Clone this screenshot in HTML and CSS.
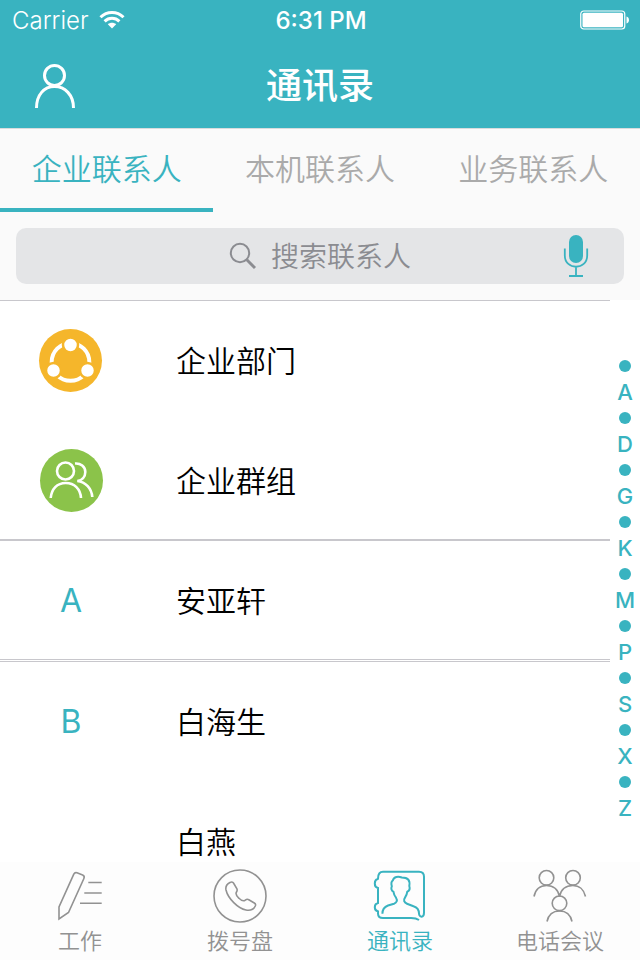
FILE: index.html
```html
<!DOCTYPE html>
<html lang="zh-CN">
<head>
    <meta charset="UTF-8">
    <meta name="viewport" content="width=device-width, initial-scale=1.0">
    <title>通讯录</title>
    <link rel="stylesheet" href="styles.css">
</head>
<body>
    <header class="header">
        <!-- 状态栏 -->
        <div class="status-bar">
            <div class="carrier">
                <span>Carrier</span>
                <svg width="26" height="20" viewBox="0 0 26 20" fill="none" stroke="#fff" stroke-width="3">
                    <path d="M1.5 7.2C8 .8 18 .8 24.500 7.200"/>
                    <path d="M5.600 11.300C9.800 7.300 16.200 7.300 20.400 11.300"/>
                    <path d="M13 18.500l-4.200-4.200c2.400-2 6-2 8.400 0z" fill="#fff" stroke="none"/>
                </svg>
            </div>
            <time class="clock">6:31 PM</time>
            <svg class="battery" width="50" height="20" viewBox="0 0 50 20">
                <rect x=".75" y="1" width="44" height="18" rx="3" fill="none" stroke="#fff" stroke-width="1.200"/>
                <rect x="2.500" y="2.700" width="40.500" height="14.600" rx="1.500" fill="#fff"/>
                <path d="M46.500 6.500c3.300.5 3.300 6.500 0 7z" fill="#fff"/>
            </svg>
        </div>
        <div class="nav">
            <button class="nav-user" aria-label="个人">
                <svg width="44" height="46" viewBox="0 0 44 46" fill="none" stroke="#fff" stroke-width="3">
                    <circle cx="21.500" cy="12.500" r="10"/>
                    <path d="M3.500 45C3.500 32 11 23.500 21.500 23.500S40.500 32 40.500 45"/>
                </svg>
            </button>
            <h1>通讯录</h1>
        </div>
    </header>

    <nav class="tabs">
        <a href="#" class="active">企业联系人</a>
        <a href="#">本机联系人</a>
        <a href="#">业务联系人</a>
    </nav>

    <!-- 搜索框 -->
    <div class="search-area">
        <div class="search">
            <label class="search-field">
                <svg width="28" height="28" viewBox="0 0 28 28" fill="none" stroke="#8b8c91">
                    <circle cx="11" cy="11" r="9.200" stroke-width="2"/>
                    <path d="M17.800 17.800L26 26" stroke-width="3"/>
                </svg>
                <input type="text" placeholder="搜索联系人" aria-label="搜索联系人">
            </label>
            <button class="mic" aria-label="语音搜索">
                <svg width="26" height="44" viewBox="0 0 26 44">
                    <rect x="6" y="1" width="14" height="28" rx="7" fill="#39b3c0"/>
                    <path d="M1.800 14.500v7c0 15 22.400 15 22.400 0v-7M13 33v9M6 42h14" fill="none" stroke="#39b3c0" stroke-width="1.800"/>
                </svg>
            </button>
        </div>
    </div>

    <main class="content">
        <div class="contacts">
            <ul class="group">
                <li><a href="#">
                    <span class="mark">
                        <svg width="64" height="64" viewBox="0 0 64 64">
                            <circle cx="31.500" cy="32.500" r="31.500" fill="#f5b62b"/>
                            <circle cx="31.500" cy="34" r="18.800" fill="none" stroke="#fff" stroke-width="4"/>
                            <g fill="#fff" stroke="#f5b62b" stroke-width="2.500">
                                <circle cx="31.500" cy="17" r="7.500"/>
                                <circle cx="14.500" cy="42.500" r="7.500"/>
                                <circle cx="48.500" cy="42.500" r="7.500"/>
                            </g>
                        </svg>
                    </span>
                    <span class="name">企业部门</span>
                </a></li>
                <li><a href="#">
                    <span class="mark">
                        <svg width="64" height="64" viewBox="0 0 64 64" fill="none" stroke="#fff" stroke-width="2.600">
                            <circle cx="32.500" cy="32.500" r="31.500" fill="#8bc34a" stroke="none"/>
                            <circle cx="26.500" cy="23" r="8.500"/>
                            <path d="M11.700 50c.8-9 6.300-15 15-15S41.500 41 42 50"/>
                            <path d="M36 15.500c5.500-.5 10.300 3 10.300 8.500 0 5-3.300 8.500-8 9 8.500 1 14.200 7.500 15 16"/>
                        </svg>
                    </span>
                    <span class="name">企业群组</span>
                </a></li>
            </ul>
            <ul class="group">
                <li><a href="#"><span class="mark">A</span><span class="name">安亚轩</span></a></li>
            </ul>
            <ul class="group">
                <li><a href="#"><span class="mark">B</span><span class="name">白海生</span></a></li>
                <li><a href="#"><span class="mark"></span><span class="name">白燕</span></a></li>
            </ul>
        </div>
        <!-- 字母索引 -->
        <nav class="index">
            <i></i><a href="#">A</a>
            <i></i><a href="#">D</a>
            <i></i><a href="#">G</a>
            <i></i><a href="#">K</a>
            <i></i><a href="#">M</a>
            <i></i><a href="#">P</a>
            <i></i><a href="#">S</a>
            <i></i><a href="#">X</a>
            <i></i><a href="#">Z</a>
        </nav>
    </main>

    <!-- 底部导航 -->
    <nav class="tab-bar">
        <a href="#">
            <svg width="56" height="56" viewBox="0 0 56 56">
                <path d="M7 53V40.800L21.800 8.200c.7-1.500 1.700-1.900 3.200-1.400l5.600 2.200c1.600.7 2 1.900 1.300 3.500L16.500 46.500z"/>
                <path d="M36.300 16.500H49.700M32.300 27H49.700M28 37.300H49.700"/>
            </svg>
            <span>工作</span>
        </a>
        <a href="#">
            <svg width="56" height="56" viewBox="0 0 56 56">
                <circle cx="28" cy="30" r="26"/>
                <path d="M18 16.500C15 18 13.300 20.500 14 24c2 8.500 12 18.500 20 20 4 .7 7.500-.5 9.300-4 .6-1.300.2-2.300-1-3l-5.500-3.300c-1.300-.8-2.500-.4-3.500.4-2 1.500-4 .5-6.300-1.800-2.500-2.300-4-4-2.500-6.300.8-1.200 1-2 .3-3.300l-3-5.200c-.8-1.500-2.200-1.800-3.800-1z"/>
            </svg>
            <span>拨号盘</span>
        </a>
        <a href="#" class="active">
            <svg width="56" height="56" viewBox="0 0 56 56">
                <path d="M47 54c-2.500-1.700-5-1.900-8-1.900H11c-3.500 0-5-1.800-5-4.500v-2.200c-2-.5-3.200-2-3.200-4.200s1.200-3.700 3.200-4.200V22c-2-.5-3.200-2-3.200-4.600s1.200-4.200 3.200-4.700C6 8 7.500 5.800 11 5.800h36c3.500 0 5 2 5 5v36c0 5-4.800 5-5 .7 0-4-1.500-6-5.500-7.300l-6.500-2.500c-3-1.200-3.800-3.500-2-6 1.200-1.700 2-3.700 2.300-6 2-.8 2.800-3.200 2-5.700 1-6-1.500-8.500-7.500-8.500-3.500-1.500-8-1-9 3-1.600 1-1.600 3.500-1 5.800-1 2.200-.3 4.700 1.600 5.400.4 2.400 1.200 4.400 2.600 6 1.600 2.500 1 5-2 6l-6 1.800c-4 1.500-5.600 4-5.600 8.200"/>
            </svg>
            <span>通讯录</span>
        </a>
        <a href="#">
            <svg width="56" height="56" viewBox="0 0 56 56">
                <circle cx="14.500" cy="11.800" r="7.300"/>
                <circle cx="41" cy="11.800" r="7.300"/>
                <circle cx="27.500" cy="37.300" r="7.300"/>
                <path d="M2 30.500c1.500-7 6-11 12.500-11S26 23.500 27.500 30.500c1.500-7 6-11 13.300-11 6.200 0 11.200 4 12.700 11M15 55.500c1.500-7 6-10.500 12.500-10.500s11 3.500 12.500 10.500"/>
            </svg>
            <span>电话会议</span>
        </a>
    </nav>
</body>
</html>
```
FILE: styles.css
```css
* {
    box-sizing: border-box;
}

body {
    margin: 0;
    height: 100vh;
    display: flex;
    flex-direction: column;
    font-family: Inter, "Noto Sans CJK SC", sans-serif;
    background: #fff;
    overflow: hidden;
}

a {
    color: inherit;
    text-decoration: none;
}

button {
    padding: 0;
    border: none;
    background: none;
    cursor: pointer;
}

svg {
    display: block;
    flex: none;
    overflow: visible;
}

/* 顶部 */
.header {
    flex: none;
    background: #39b3c0;
    color: #fff;
}

.status-bar {
    display: grid;
    grid-template-columns: 1fr auto 1fr;
    align-items: center;
    height: 40px;
    padding: 0 10px 0 12px;
    font-size: 24px;
}

.carrier {
    display: flex;
    align-items: center;
    gap: 10px;
    font-weight: 300;
}

.clock {
    font-weight: 500;
}

.battery {
    justify-self: end;
}

.nav {
    display: grid;
    grid-template-columns: 1fr auto 1fr;
    align-items: center;
    height: 88px;
    padding: 3px 33px 0;
}

.nav-user {
    justify-self: start;
}

.nav h1 {
    margin: 0;
    font-size: 36px;
    line-height: 48px;
    font-weight: 500;
}

/* 分类标签 */
.tabs {
    flex: none;
    display: flex;
    height: 84px;
    background: #fafafa;
    border-top: 1px solid #d8dcdd;
}

.tabs a {
    flex: 1;
    display: flex;
    align-items: center;
    justify-content: center;
    padding-bottom: 4px;
    border-bottom: 4px solid transparent;
    font-size: 30px;
    font-weight: 350;
    color: #aaa;
}

.tabs .active {
    color: #39b3c0;
    border-color: #39b3c0;
}

.search-area {
    flex: none;
    padding: 16px;
    background: #fafafa;
}

.search {
    display: grid;
    grid-template-columns: 1fr auto 1fr;
    align-items: center;
    height: 56px;
    padding: 0 35px;
    border-radius: 10px;
    background: #e4e5e7;
}

.search-field {
    grid-column: 2;
    display: flex;
    align-items: center;
    gap: 14px;
}

.search input {
    width: 140px;
    padding: 2px 0 0;
    border: none;
    outline: none;
    background: none;
    font-family: inherit;
    font-size: 28px;
    font-weight: 350;
    color: #333;
}

.search input::placeholder {
    color: #8b8c91;
}

.mic {
    justify-self: end;
}

/* 联系人列表 */
.content {
    flex: 1;
    min-height: 0;
    display: flex;
    overflow: hidden;
}

.contacts {
    flex: 1;
}

.group {
    margin: 0;
    padding: 0;
    list-style: none;
    border-top: 1px solid #c8c7cc;
    border-bottom: 1px solid #c8c7cc;
}

.group + .group {
    margin-bottom: 1px;
}

.group li + li {
    margin-top: 2px;
}

.group a {
    display: grid;
    grid-template-columns: 142px 1fr;
    align-items: center;
    gap: 34px;
    height: 118px;
    color: #000;
}

.name {
    padding-bottom: 2px;
    font-size: 30px;
    font-weight: 350;
}

.mark {
    display: flex;
    justify-content: center;
    font-size: 32px;
    color: #39b3c0;
}

.index {
    flex: none;
    width: 30px;
    padding-top: 53px;
    display: flex;
    flex-direction: column;
    align-items: center;
    font-size: 22px;
    font-weight: 500;
    line-height: 26px;
    color: #39b3c0;
}

.index i {
    flex: none;
    width: 12px;
    height: 12px;
    margin: 7px 0;
    border-radius: 50%;
    background: #39b3c0;
}

/* 底部导航 */
.tab-bar {
    flex: none;
    display: flex;
    height: 98px;
    background: #fdfdfd;
}

.tab-bar a {
    flex: 1;
    display: flex;
    flex-direction: column;
    align-items: center;
    padding-top: 4px;
    font-size: 22px;
    line-height: 38px;
    font-weight: 350;
    color: #929292;
}

.tab-bar svg {
    fill: none;
    stroke: currentColor;
    stroke-width: 1.6;
}

.tab-bar .active {
    color: #39b3c0;
}

.tab-bar .active svg {
    stroke-width: 2;
}
```
